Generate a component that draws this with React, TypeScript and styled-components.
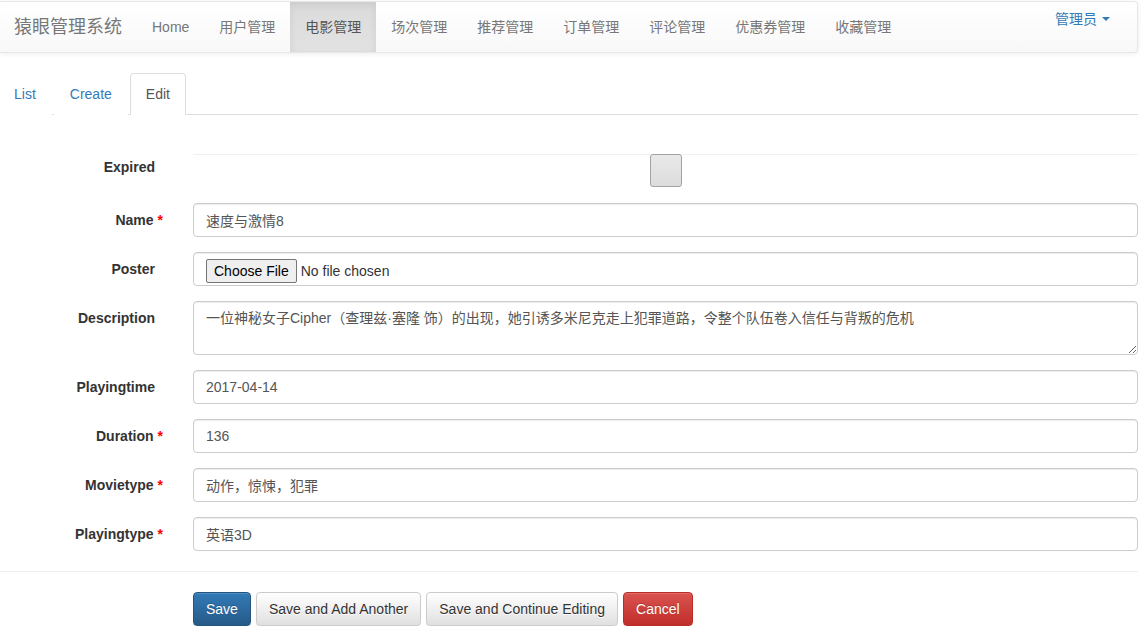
import { FC } from "react";
import styled, { createGlobalStyle } from "styled-components";

const GlobalStyle = createGlobalStyle`
	* {
		box-sizing: border-box;
	}
	body {
		margin: 0;
		background: #fff;
		color: #333;
		font-family: "Liberation Sans", "Noto Sans CJK SC", Arial, sans-serif;
		font-size: 14px;
		line-height: 20px;
	}
`;

const Page = styled.div`
	width: 1138px;
	padding-top: 1px;
`;

const Navbar = styled.nav`
	display: flex;
	align-items: flex-start;
	min-height: 52px;
	margin-bottom: 20px;
	background: linear-gradient(to bottom, #fff 0%, #f8f8f8 100%);
	border: 1px solid #e7e7e7;
	border-left: none;
	border-radius: 0 4px 4px 0;
	box-shadow: inset 0 1px 0 rgba(255, 255, 255, 0.15), 0 1px 5px rgba(0, 0, 0, 0.075);
`;

const Brand = styled.a`
	padding: 15px 15px 15px 14px;
	font-size: 18px;
	line-height: 20px;
	color: #777;
	text-decoration: none;
`;

const NavList = styled.ul`
	display: flex;
	margin: 0;
	padding: 0;
	list-style: none;
	flex: 1;
`;

const NavItem = styled.li<{ $active?: boolean }>`
	padding: 15px;
	line-height: 20px;
	color: ${(p) => (p.$active ? "#555" : "#777")};
	background: ${(p) => (p.$active ? "linear-gradient(to bottom, #dbdbdb 0%, #e2e2e2 100%)" : "transparent")};
	box-shadow: ${(p) => (p.$active ? "inset 0 3px 9px rgba(0, 0, 0, 0.075)" : "none")};
	cursor: pointer;
`;

const UserMenu = styled.a`
	display: flex;
	align-items: center;
	gap: 5px;
	margin-right: 12px;
	padding: 7px 15px;
	color: #337ab7;
	text-decoration: none;
	cursor: pointer;
`;

const Caret = styled.span`
	width: 0;
	height: 0;
	border-top: 4px solid #337ab7;
	border-left: 4px solid transparent;
	border-right: 4px solid transparent;
`;

const Tabs = styled.ul`
	display: flex;
	margin: 0 0 0 -2px;
	padding: 0;
	list-style: none;
	border-bottom: 1px solid #ddd;
`;

const Tab = styled.li<{ $active?: boolean }>`
	margin-right: 2px;
	margin-bottom: -1px;
	padding: 10px 15px;
	line-height: 20px;
	border: 1px solid ${(p) => (p.$active ? "#ddd" : "transparent")};
	border-bottom-color: ${(p) => (p.$active ? "#fff" : "transparent")};
	border-radius: 4px 4px 0 0;
	background: #fff;
	color: ${(p) => (p.$active ? "#555" : "#337ab7")};
	cursor: pointer;
`;

const Form = styled.form`
	margin-top: 35px;
`;

const Row = styled.div`
	display: grid;
	grid-template-columns: 163px 1fr;
	column-gap: 30px;
	margin-bottom: 15px;
`;

const Label = styled.label`
	padding: 7px 8px 0 0;
	text-align: right;
	font-weight: bold;
	line-height: 20px;
	color: #333;
`;

const Star = styled.strong`
	margin-left: 4px;
	margin-right: -8px;
	color: red;
`;

const CheckCell = styled.div`
	display: flex;
	justify-content: center;
	margin-top: 4px;
	padding-bottom: 1px;
	border-top: 1px solid #f0f0f0;
`;

const Check = styled.input`
	appearance: none;
	width: 32px;
	height: 33px;
	margin: -1px 0 0 0;
	border: 1px solid #a2a2a2;
	border-radius: 3px;
	background: linear-gradient(to bottom, #e9e9e9 0%, #dcdcdc 100%);
`;

const Control = styled.input`
	display: block;
	width: 100%;
	height: 34px;
	padding: 6px 12px;
	font: inherit;
	font-size: 14px;
	line-height: 20px;
	color: #555;
	background: #fff;
	border: 1px solid #ccc;
	border-radius: 4px;
	box-shadow: inset 0 1px 1px rgba(0, 0, 0, 0.075);
	outline: none;

	&::file-selector-button {
		margin-right: 4px;
		padding: 1px 7px;
		font: inherit;
		font-size: 14px;
		color: #000;
		background: #efefef;
		border: 1px solid #767676;
		border-radius: 2px;
	}
`;

const FileControl = styled(Control)`
	color: #333;
`;

const TextArea = styled.textarea`
	display: block;
	width: 100%;
	height: 54px;
	padding: 6px 12px;
	font: inherit;
	font-size: 14px;
	line-height: 20px;
	color: #555;
	border: 1px solid #ccc;
	border-radius: 4px;
	box-shadow: inset 0 1px 1px rgba(0, 0, 0, 0.075);
	outline: none;
	resize: vertical;
`;

const Divider = styled.hr`
	margin: 20px 0;
	border: 0;
	border-top: 1px solid #eee;
`;

const Actions = styled.div`
	display: flex;
	gap: 5px;
	padding-left: 193px;
`;

const variants = {
	primary: {
		bg: "linear-gradient(to bottom, #337ab7 0%, #265a88 100%)",
		border: "#245580",
		color: "#fff",
		shadow: "0 -1px 0 rgba(0, 0, 0, 0.2)",
	},
	default: {
		bg: "linear-gradient(to bottom, #fff 0%, #e0e0e0 100%)",
		border: "#ccc",
		color: "#333",
		shadow: "0 1px 0 #fff",
	},
	danger: {
		bg: "linear-gradient(to bottom, #d9534f 0%, #c12e2a 100%)",
		border: "#b92c28",
		color: "#fff",
		shadow: "0 -1px 0 rgba(0, 0, 0, 0.2)",
	},
};

const Button = styled.button<{ $variant: keyof typeof variants }>`
	height: 34px;
	padding: 6px 12px;
	font: inherit;
	font-size: 14px;
	line-height: 20px;
	color: ${(p) => variants[p.$variant].color};
	background: ${(p) => variants[p.$variant].bg};
	border: 1px solid ${(p) => variants[p.$variant].border};
	border-radius: 4px;
	text-shadow: ${(p) => variants[p.$variant].shadow};
	box-shadow: inset 0 1px 0 rgba(255, 255, 255, 0.15), 0 1px 1px rgba(0, 0, 0, 0.075);
	cursor: pointer;
`;

const menu = ["Home", "用户管理", "电影管理", "场次管理", "推荐管理", "订单管理", "评论管理", "优惠券管理", "收藏管理"];

const fields = [
	{ label: "Name", required: true, value: "速度与激情8" },
	{ label: "Poster", type: "file" },
	{
		label: "Description",
		type: "textarea",
		value: "一位神秘女子Cipher（查理兹·塞隆 饰）的出现，她引诱多米尼克走上犯罪道路，令整个队伍卷入信任与背叛的危机",
	},
	{ label: "Playingtime", value: "2017-04-14" },
	{ label: "Duration", required: true, value: "136" },
	{ label: "Movietype", required: true, value: "动作，惊悚，犯罪" },
	{ label: "Playingtype", required: true, value: "英语3D" },
];

const App: FC = () => {
	return (
		<>
			<GlobalStyle />
			<Page>
				<Navbar>
					<Brand>猿眼管理系统</Brand>
					<NavList>
						{menu.map((item) => (
							<NavItem key={item} $active={item === "电影管理"}>
								{item}
							</NavItem>
						))}
					</NavList>
					<UserMenu>
						管理员
						<Caret />
					</UserMenu>
				</Navbar>

				<Tabs>
					<Tab>List</Tab>
					<Tab>Create</Tab>
					<Tab $active>Edit</Tab>
				</Tabs>

				<Form onSubmit={(e) => e.preventDefault()}>
					<Row>
						<Label>Expired</Label>
						<CheckCell>
							<Check type="checkbox" />
						</CheckCell>
					</Row>
					{fields.map((f) => (
						<Row key={f.label}>
							<Label>
								{f.label}
								{f.required && <Star>*</Star>}
							</Label>
							{f.type === "file" ? (
								<FileControl type="file" />
							) : f.type === "textarea" ? (
								<TextArea defaultValue={f.value} />
							) : (
								<Control type="text" defaultValue={f.value} />
							)}
						</Row>
					))}
					<Divider />
					<Actions>
						<Button $variant="primary">Save</Button>
						<Button $variant="default">Save and Add Another</Button>
						<Button $variant="default">Save and Continue Editing</Button>
						<Button $variant="danger">Cancel</Button>
					</Actions>
				</Form>
			</Page>
		</>
	);
};

export default App;
